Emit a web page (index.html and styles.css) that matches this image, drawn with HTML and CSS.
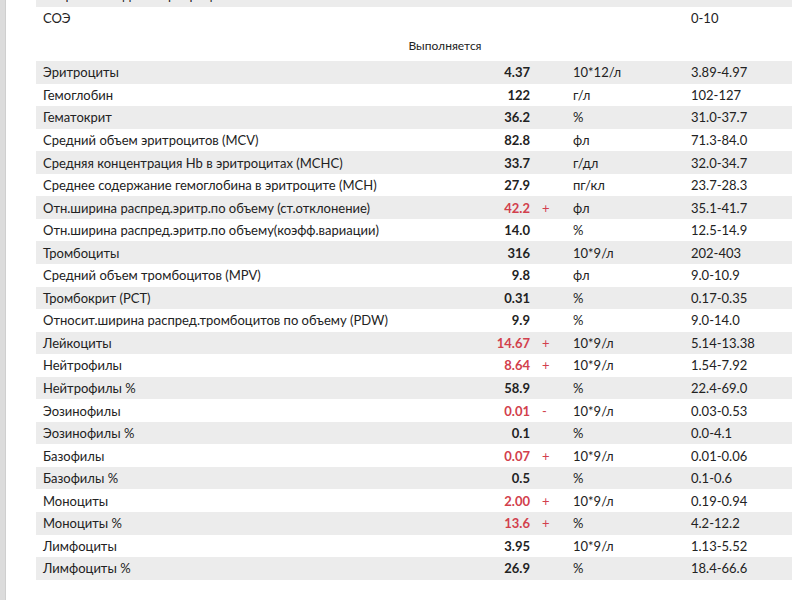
FILE: index.html
```html
<!DOCTYPE html>
<html lang="ru">
<head>
<meta charset="utf-8">
<link rel="stylesheet" href="styles.css">
</head>
<body>
<div class="page">
  <div class="frame"></div>
  <div class="content">
    <table class="results">
      <colgroup>
        <col class="c-name"><col class="c-val"><col class="c-flag"><col class="c-unit"><col class="c-range">
      </colgroup>
      <tbody>
        <tr class="shade"><td>Скорость оседания эритроцитов</td><td class="val"></td><td></td><td></td><td></td></tr>
        <tr><td>СОЭ</td><td class="val"></td><td></td><td></td><td>0-10</td></tr>
        <tr class="status"><td colspan="5">Выполняется</td></tr>
        <tr class="shade"><td>Эритроциты</td><td class="val">4.37</td><td class="flag"></td><td>10*12/л</td><td>3.89-4.97</td></tr>
        <tr><td>Гемоглобин</td><td class="val">122</td><td class="flag"></td><td>г/л</td><td>102-127</td></tr>
        <tr class="shade"><td>Гематокрит</td><td class="val">36.2</td><td class="flag"></td><td>%</td><td>31.0-37.7</td></tr>
        <tr><td>Средний объем эритроцитов (MCV)</td><td class="val">82.8</td><td class="flag"></td><td>фл</td><td>71.3-84.0</td></tr>
        <tr class="shade"><td>Средняя концентрация Hb в эритроцитах (MCHC)</td><td class="val">33.7</td><td class="flag"></td><td>г/дл</td><td>32.0-34.7</td></tr>
        <tr><td>Среднее содержание гемоглобина в эритроците (MCH)</td><td class="val">27.9</td><td class="flag"></td><td>пг/кл</td><td>23.7-28.3</td></tr>
        <tr class="shade"><td>Отн.ширина распред.эритр.по объему (ст.отклонение)</td><td class="val bad">42.2</td><td class="flag bad">+</td><td>фл</td><td>35.1-41.7</td></tr>
        <tr><td>Отн.ширина распред.эритр.по объему(коэфф.вариации)</td><td class="val">14.0</td><td class="flag"></td><td>%</td><td>12.5-14.9</td></tr>
        <tr class="shade"><td>Тромбоциты</td><td class="val">316</td><td class="flag"></td><td>10*9/л</td><td>202-403</td></tr>
        <tr><td>Средний объем тромбоцитов (MPV)</td><td class="val">9.8</td><td class="flag"></td><td>фл</td><td>9.0-10.9</td></tr>
        <tr class="shade"><td>Тромбокрит (PCT)</td><td class="val">0.31</td><td class="flag"></td><td>%</td><td>0.17-0.35</td></tr>
        <tr><td>Относит.ширина распред.тромбоцитов по объему (PDW)</td><td class="val">9.9</td><td class="flag"></td><td>%</td><td>9.0-14.0</td></tr>
        <tr class="shade"><td>Лейкоциты</td><td class="val bad">14.67</td><td class="flag bad">+</td><td>10*9/л</td><td>5.14-13.38</td></tr>
        <tr><td>Нейтрофилы</td><td class="val bad">8.64</td><td class="flag bad">+</td><td>10*9/л</td><td>1.54-7.92</td></tr>
        <tr class="shade"><td>Нейтрофилы %</td><td class="val">58.9</td><td class="flag"></td><td>%</td><td>22.4-69.0</td></tr>
        <tr><td>Эозинофилы</td><td class="val bad">0.01</td><td class="flag bad">-</td><td>10*9/л</td><td>0.03-0.53</td></tr>
        <tr class="shade"><td>Эозинофилы %</td><td class="val">0.1</td><td class="flag"></td><td>%</td><td>0.0-4.1</td></tr>
        <tr><td>Базофилы</td><td class="val bad">0.07</td><td class="flag bad">+</td><td>10*9/л</td><td>0.01-0.06</td></tr>
        <tr class="shade"><td>Базофилы %</td><td class="val">0.5</td><td class="flag"></td><td>%</td><td>0.1-0.6</td></tr>
        <tr><td>Моноциты</td><td class="val bad">2.00</td><td class="flag bad">+</td><td>10*9/л</td><td>0.19-0.94</td></tr>
        <tr class="shade"><td>Моноциты %</td><td class="val bad">13.6</td><td class="flag bad">+</td><td>%</td><td>4.2-12.2</td></tr>
        <tr><td>Лимфоциты</td><td class="val">3.95</td><td class="flag"></td><td>10*9/л</td><td>1.13-5.52</td></tr>
        <tr class="shade"><td>Лимфоциты %</td><td class="val">26.9</td><td class="flag"></td><td>%</td><td>18.4-66.6</td></tr>
      </tbody>
    </table>
  </div>
</div>
</body>
</html>
```

FILE: styles.css
```css
html, body {
  margin: 0;
  padding: 0;
  background: #ffffff;
  overflow: hidden;
}

.page {
  display: flex;
  width: 792px;
  height: 600px;
  overflow: hidden;
  font-family: Lato, "Open Sans", "Liberation Sans", sans-serif;
  font-size: 13px;
  color: #222222;
}

.frame {
  flex: 0 0 5px;
  background: #dcdcdc;
  border-right: 1px solid #cfcfcf;
}

.content {
  flex: 1 0 auto;
  padding-left: 30px;
}

.results {
  margin-top: -16px;
  width: 818px;
  table-layout: fixed;
  border-collapse: collapse;
}

.c-name { width: 454px; }
.c-val { width: 42px; }
.c-flag { width: 34px; }
.c-unit { width: 118px; }
.c-range { width: auto; }

.results td {
  height: 22.55px;
  padding: 0 0 0 7px;
  line-height: 16px;
  white-space: nowrap;
  overflow: hidden;
  vertical-align: middle;
}

.results tr.shade td {
  background: #ececec;
}

.results tr.status td {
  height: 31px;
  text-align: center;
  padding: 0;
  font-size: 12px;
  padding-top: 1px;
}

.results td.val {
  text-align: right;
  font-weight: 700;
  padding: 0 2px 0 0;
}

.results td.flag {
  padding-left: 10px;
  font-weight: 400;
}

.bad {
  color: #d2404c;
}
```
